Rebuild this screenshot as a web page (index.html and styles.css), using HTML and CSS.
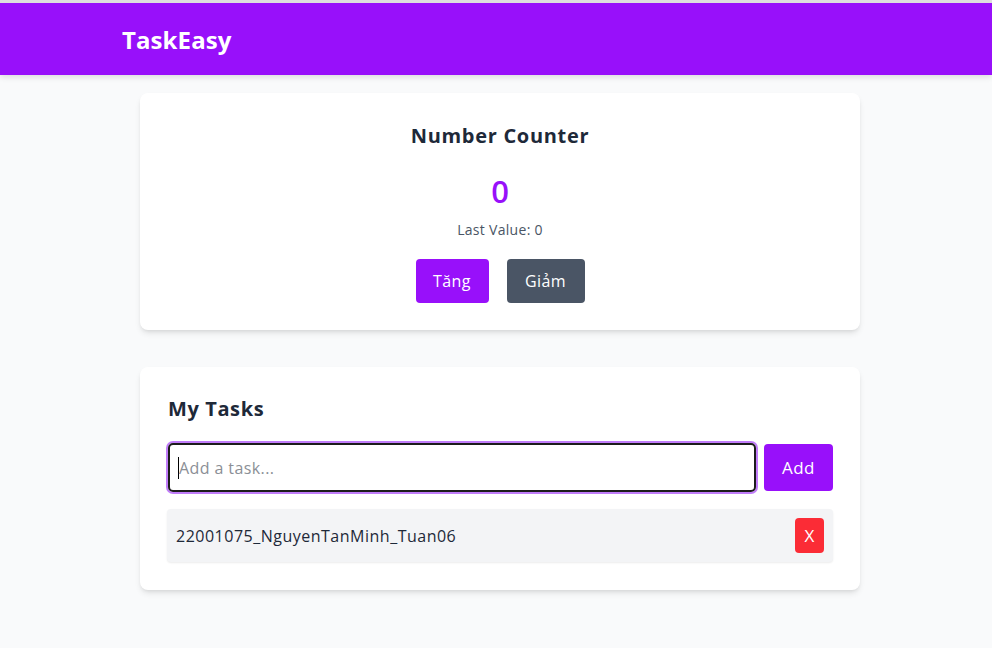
FILE: index.html
```html
<!DOCTYPE html>
<html>
<head>
<meta charset="utf-8">
<link rel="stylesheet" href="styles.css">
</head>
<body>
<header class="topbar">
  <div class="brand">TaskEasy</div>
</header>
<main class="main">
  <section class="card counter">
    <h2 class="counter-title">Number Counter</h2>
    <div class="counter-value">0</div>
    <div class="counter-last">Last Value: 0</div>
    <div class="counter-actions">
      <button class="btn btn-purple btn-inc">Tăng</button>
      <button class="btn btn-gray btn-dec">Giảm</button>
    </div>
  </section>
  <section class="card tasks">
    <h2 class="tasks-title">My Tasks</h2>
    <div class="task-form">
      <div class="task-input"><span class="caret"></span><span class="placeholder">Add a task...</span></div>
      <button class="btn btn-purple btn-add">Add</button>
    </div>
    <div class="task-item">
      <span class="task-text">22001075_NguyenTanMinh_Tuan06</span>
      <button class="btn-x">X</button>
    </div>
  </section>
</main>
</body>
</html>
```
FILE: styles.css
```css
* { box-sizing: border-box; }
html, body { margin: 0; padding: 0; }
body {
  background: #f9fafb;
  font-family: "Open Sans", "Noto Sans", sans-serif;
  color: #1e2939;
  height: 648px;
  overflow: hidden;
  border-top: 3px solid #dedede;
}
.topbar {
  background: #9810fa;
  height: 72px;
  display: flex;
  align-items: center;
  padding-left: 122px;
  box-shadow: 0 2px 6px rgba(0,0,0,0.12);
}
.brand {
  color: #fff;
  font-weight: 700;
  font-size: 24px;
  letter-spacing: 0.1px;
}
.main {
  width: 720px;
  margin-left: 140px;
  padding-top: 18px;
  display: flex;
  flex-direction: column;
  gap: 37px;
}
.card {
  background: #fff;
  border-radius: 8px;
  box-shadow: 0 4px 6px -1px rgba(0,0,0,0.1), 0 2px 4px -2px rgba(0,0,0,0.1);
}
.counter {
  height: 237px;
  display: flex;
  flex-direction: column;
  align-items: center;
  padding-top: 29px;
}
.counter-title {
  margin: 0;
  font-size: 20px;
  line-height: 28px;
  font-weight: 700;
  letter-spacing: 0.7px;
}
.counter-value {
  margin-top: 23px;
  color: #9810fa;
  font-size: 31px;
  line-height: 36px;
  font-weight: 600;
}
.counter-last {
  margin-top: 11px;
  color: #4a5565;
  font-size: 14px;
  line-height: 20px;
  letter-spacing: 0.3px;
}
.counter-actions {
  margin-top: 19px;
  display: flex;
  gap: 18px;
}
.btn {
  border: none;
  border-radius: 4px;
  color: #fff;
  font-family: inherit;
  font-size: 16px;
  height: 44px;
  padding: 0;
  letter-spacing: 0.4px;
}
.btn-purple { background: #9810fa; }
.btn-gray { background: #4a5565; }
.btn-inc { width: 73px; }
.btn-dec { width: 78px; }
.tasks {
  height: 223px;
  padding: 28px 27px 0 27px;
}
.tasks-title {
  margin: 0 0 0 1px;
  font-size: 20px;
  line-height: 28px;
  font-weight: 700;
  letter-spacing: 0.6px;
}
.task-form {
  margin-top: 20px;
  display: flex;
  gap: 8px;
  align-items: center;
}
.task-input {
  flex: 1;
  height: 49px;
  border: 2px solid #1b1b1b;
  border-radius: 5px;
  box-shadow: 0 0 0 2px #c07cf9;
  display: flex;
  align-items: center;
  padding-left: 8px;
  margin-left: 1px;
}
.caret {
  width: 1px;
  height: 22px;
  background: #000;
}
.placeholder {
  color: #8b8f96;
  font-size: 16px;
  letter-spacing: 0.4px;
}
.btn-add {
  width: 69px;
  height: 47px;
  font-size: 17px;
}
.task-item {
  margin-top: 17px;
  height: 53px;
  background: #f3f4f6;
  border-radius: 4px;
  box-shadow: 0 1px 2px rgba(0,0,0,0.08);
  display: flex;
  align-items: center;
  justify-content: space-between;
  padding: 0 9px 0 9px;
}
.task-text {
  font-size: 16px;
  letter-spacing: 0.5px;
  color: #1e2939;
}
.btn-x {
  border: none;
  background: #fb2c36;
  color: #fff;
  border-radius: 4px;
  width: 29px;
  height: 35px;
  font-family: inherit;
  font-size: 17px;
  padding: 0;
}
```
